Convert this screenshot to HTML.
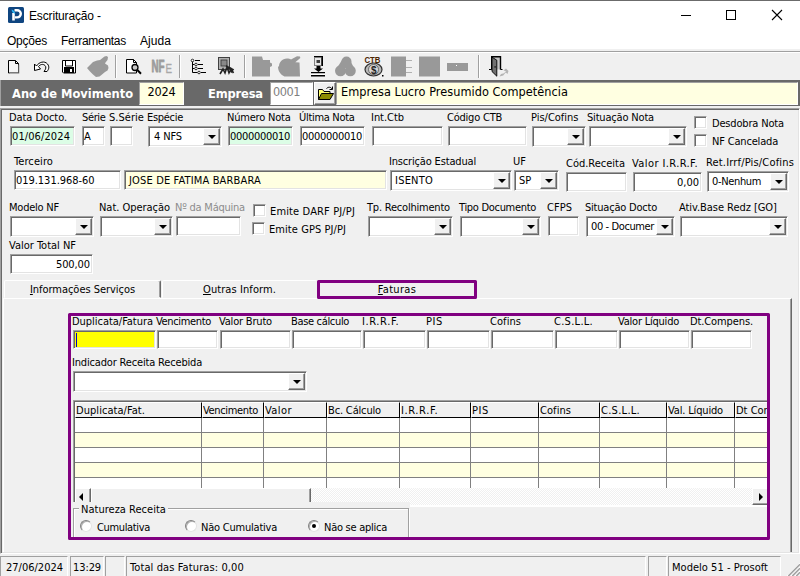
<!DOCTYPE html>
<html><head><meta charset="utf-8"><title>Escrituração</title>
<style>
html,body{margin:0;padding:0;}
body{width:800px;height:576px;position:relative;overflow:hidden;background:#f0f0f0;font:11px/13px "DejaVu Sans Condensed","Liberation Sans",sans-serif;color:#000;}
div,span,i{box-sizing:border-box;}
.abs,.lb,.ed,.ck,.rd{position:absolute;}
.lb{white-space:nowrap;height:13px;line-height:13px;}
.ed{background:#fff;border:1px solid;border-color:#a0a0a0 #fff #fff #a0a0a0;box-shadow:inset 1px 1px 0 #696969,inset -1px -1px 0 #e3e3e3;padding:3px 2px 0 1px;line-height:13px;white-space:nowrap;overflow:hidden;}
.cb{padding-right:19px;}
.dd{position:absolute;right:1px;top:1px;bottom:1px;width:17px;background:#f0f0f0;border:1px solid;border-color:#fff #696969 #696969 #fff;box-shadow:inset -1px -1px 0 #a0a0a0;}
.dd i{position:absolute;left:4px;top:6px;width:0;height:0;border-left:4px solid transparent;border-right:4px solid transparent;border-top:4px solid #000;}
.ck{width:13px;height:13px;background:#fff;border:1px solid;border-color:#a0a0a0 #fff #fff #a0a0a0;box-shadow:inset 1px 1px 0 #696969,inset -1px -1px 0 #e3e3e3;}
.rd{width:12px;height:12px;border-radius:50%;background:#fff;border:1px solid;border-color:#808080 #e3e3e3 #e3e3e3 #808080;box-shadow:inset 1px 1px 0 #b0b0b0;transform:rotate(0deg);}
.rd i{position:absolute;left:3px;top:3px;width:4px;height:4px;border-radius:50%;background:#000;}
u{text-decoration:underline;}
.mn{font:12px/16px "Liberation Sans",sans-serif;white-space:nowrap;}
.bd{font:bold 12.75px/16px "DejaVu Sans Condensed","Liberation Sans",sans-serif;color:#fff;white-space:nowrap;}
.hv{font:12.6px/16px "DejaVu Sans Condensed","Liberation Sans",sans-serif;white-space:nowrap;padding-top:1px;border:1px solid;border-color:#a0a0a0 #fff #fff #a0a0a0;}
.tab{text-align:center;line-height:14px;padding-top:2px;border-radius:2px 2px 0 0;border:1px solid;border-color:#fff #696969 transparent #fff;box-shadow:inset -1px 0 0 #a0a0a0;background:#f0f0f0;}
.gh{background:#f0f0f0;border:1px solid;border-color:#fff #000 #000 #fff;padding:1px 0 0 0;line-height:13px;white-space:nowrap;overflow:hidden;}
.btn{background:#f0f0f0;border:1px solid;border-color:#fff #696969 #696969 #fff;box-shadow:inset -1px -1px 0 #a0a0a0;}
.sbt{background:#f0f0f0 conic-gradient(#fff 25%,#f0f0f0 0 50%,#fff 0 75%,#f0f0f0 0) 0 0/2px 2px;}
.al{position:absolute;left:3px;top:4px;width:0;height:0;border-top:4px solid transparent;border-bottom:4px solid transparent;border-right:4px solid #000;}
.ar{position:absolute;left:6px;top:4px;width:0;height:0;border-top:4px solid transparent;border-bottom:4px solid transparent;border-left:4px solid #000;}
.sp{border:1px solid;border-color:#a0a0a0 #fff #fff #a0a0a0;padding:4px 0 0 5px;line-height:13px;white-space:nowrap;overflow:hidden;}
</style></head><body>
<div class="abs" style="left:0;top:0;width:800px;height:49px;background:#fff"></div>
<div class="abs" style="left:0;top:0;width:800px;height:1px;background:#6b6b6b"></div>
<svg class="abs" style="left:8px;top:7px" width="16" height="16" viewBox="0 0 16 16"><rect x="0" y="0" width="16" height="16" rx="1.5" fill="#0f4580"/><path d="M5.500 13.500V6" fill="none" stroke="#fff" stroke-width="2.600"/><path d="M6.500 3.200h2.700a3.600 3.600 0 0 1 0 7.200H6.800" fill="none" stroke="#fff" stroke-width="2.400"/><path d="M3.500 2.500c2 .5 3.500 2 3.800 4.200c-2-.3-3.400-1.700-3.800-4.200z" fill="#29b6f6"/></svg>
<div class="abs" style="left:29px;top:8px;font:12px/16px 'Liberation Sans',sans-serif;letter-spacing:-0.15px;white-space:nowrap">Escrituração -</div>
<svg class="abs" style="left:662px;top:0" width="138" height="30" viewBox="0 0 138 30"><g stroke="#000" stroke-width="1" fill="none" shape-rendering="crispEdges"><path d="M19 15.5h10"/><rect x="64.5" y="10.5" width="9" height="9"/></g><path d="M110 10l10 10M120 10l-10 10" stroke="#000" stroke-width="1.1" fill="none"/></svg>
<div class="abs mn" style="left:7px;top:33px;letter-spacing:-0.23px;">Opções</div>
<div class="abs mn" style="left:61px;top:33px;letter-spacing:-0.28px;">Ferramentas</div>
<div class="abs mn" style="left:140px;top:33px;letter-spacing:0.06px;">Ajuda</div>
<div class="abs" style="left:0;top:51px;width:800px;height:1px;background:#a0a0a0"></div>
<div class="abs" style="left:0;top:52px;width:800px;height:1px;background:#fff"></div>
<div class="abs" style="left:115px;top:55px;width:2px;height:23px;border-left:1px solid #a0a0a0;border-right:1px solid #fff"></div>
<div class="abs" style="left:179px;top:55px;width:2px;height:23px;border-left:1px solid #a0a0a0;border-right:1px solid #fff"></div>
<div class="abs" style="left:244px;top:55px;width:2px;height:23px;border-left:1px solid #a0a0a0;border-right:1px solid #fff"></div>
<div class="abs" style="left:478px;top:55px;width:2px;height:23px;border-left:1px solid #a0a0a0;border-right:1px solid #fff"></div>
<svg class="abs" style="left:0;top:52px" width="520" height="28" viewBox="0 52 520 28"><!-- new --><path d="M8.500 60.500h7l3 3v9.500h-10z" fill="#f6f6f6" stroke="#000"/><path d="M15.500 60.500v3h3" fill="none" stroke="#000"/><path d="M9.500 73.500h9.500v-9" fill="none" stroke="#b0b0b0" stroke-width="1"/><!-- undo --><path d="M34.500 70.500v-6.500l2 2c2.500-4 8-5.500 11-2c2 2.500 1.500 5-0.500 7.500h-3c2-2.500 2.500-4.500 1-6c-2-2-5-1-6.500 1l2 2.500z" fill="#fff" stroke="#000" stroke-linejoin="round"/><!-- save --><path d="M62.500 60.500h13v12.500h-12l-1-1z" fill="#fff" stroke="#000"/><rect x="64" y="67" width="10" height="6" fill="#000"/><rect x="70" y="69" width="2" height="3" fill="#fff"/><path d="M65.500 61v5h7v-5" fill="none" stroke="#000"/><!-- hand (disabled) --><path d="M87 68l6-6l4-1.500l3-.5l4.500-3.500l2-.5l1.500 1l-.5 3l-2 2.500l-.5 1l3 2l.5 2.500l-1 2.500l-2.500 1.500l-3 2.500l-2.500 2l-3.500 .5l-3-2.500l-3-3z" fill="#999"/><!-- preview --><path d="M126.500 59.500h7l3 3v10.500h-10z" fill="#fff" stroke="#000"/><path d="M133.500 59.500v3h3" fill="none" stroke="#000"/><circle cx="135" cy="67.500" r="3" fill="#c8c8c8" stroke="#000" stroke-width="1.300"/><path d="M137.300 70l3.700 3.700" stroke="#000" stroke-width="2"/><!-- NFE disabled --><text x="151.500" y="72" font-family="'Liberation Sans',sans-serif" font-weight="bold" font-size="16.500" fill="#9c9c9c" stroke="#9c9c9c" stroke-width=".9" textLength="13" lengthAdjust="spacingAndGlyphs">NF</text><text x="165.500" y="73" font-family="'Liberation Sans',sans-serif" font-size="12" fill="#a8a8a8" stroke="#a8a8a8" stroke-width=".3" textLength="6.500" lengthAdjust="spacingAndGlyphs">E</text><!-- tree --><g stroke="#000" fill="none"><path d="M192.500 61v11.500M192.500 64.500h2M192.500 68.500h2M192.500 72.500h5"/><path d="M195 60.500h5M198 64.500h5M198 68.500h5M201 72.500h5" stroke-width="1"/></g><g fill="#fff" stroke="#000" stroke-width=".8"><circle cx="192.500" cy="60.500" r="1.300"/><circle cx="196" cy="64.500" r="1.300"/><circle cx="196" cy="68.500" r="1.300"/><circle cx="199" cy="72.500" r="1.300"/></g><!-- gear icon --><rect x="218.500" y="57.500" width="11" height="12" fill="#b0b0b0" stroke="#404040"/><rect x="221" y="60" width="6" height="6" fill="#888" stroke="#333" stroke-width=".8"/><path d="M220 74l3-5l2 4l2-6l2 6l2-4l2.500 4M226 66l7 3.500l-2 3" fill="none" stroke="#222" stroke-width="1.600"/><!-- gray shapes --><path d="M252 56.500h10l1 3.500h7v2.500l2 1v2.500l-2 1v9.500h-18z" fill="#999"/><path d="M279 66.500c0-4 3-8 8-8c1.500 0 3 .4 4 1l6-3.300l3 .3l.3 1.500l-5 4.200l4.200 .3l.5 14h-15.500c-3.500-1.500-6.500-5-6.500-10z" fill="#999"/><!-- download --><rect x="314" y="56" width="9" height="1.500" fill="#000"/><rect x="314.500" y="57.500" width="7" height="8" fill="#e8e8e8" stroke="#808080"/><rect x="321.500" y="57" width="1.500" height="9" fill="#000"/><rect x="316.500" y="60" width="3.500" height="3" fill="#404040"/><path d="M316.500 66h4v2.500h2.500l-4.500 3.500l-4.500-3.500h2.500z" fill="#000"/><rect x="311" y="72" width="14" height="1.500" fill="#000"/><rect x="311" y="73.500" width="14" height="1.500" fill="#fff"/><rect x="311" y="75" width="14" height="1.500" fill="#000"/><g fill="#999"><circle cx="346.500" cy="61.500" r="5"/><circle cx="340.500" cy="70.800" r="5.500"/><circle cx="350.300" cy="70.800" r="5.500"/><path d="M342 60l-5 8h17l-4-8z"/></g><!-- CTB --><text x="364.500" y="62.500" font-family="'Liberation Sans',sans-serif" font-weight="bold" font-size="8.500" fill="#4a2500" textLength="16" lengthAdjust="spacingAndGlyphs">CTB</text><ellipse cx="373.500" cy="69.500" rx="8.500" ry="6.500" fill="#b8b8b8" stroke="#303030" stroke-width="1.200"/><ellipse cx="373.500" cy="69.500" rx="5" ry="5" fill="#d8d8d8" stroke="#555" stroke-width=".8"/><text x="371" y="73.500" font-family="'Liberation Sans',sans-serif" font-weight="bold" font-size="10" fill="#222">$</text><rect x="382" y="75" width="1.500" height="1.500" fill="#000"/><!-- gray shapes 4,5,6 --><rect x="391" y="56.500" width="15" height="20" fill="#999"/><path d="M406 60.500h6M406 67.500h6M406 72.500h6" stroke="#b0b0b0" stroke-width="1"/><rect x="419" y="56.500" width="21" height="20" fill="#999"/><rect x="447" y="63" width="21" height="8" fill="#999"/><rect x="456" y="65" width="1" height="1" fill="#fff"/><!-- door --><rect x="492" y="57" width="8.500" height="12.500" fill="#c4c4c4"/><path d="M491.700 69.500v-12.800h8.800v12.800" fill="none" stroke="#000" stroke-width="1.400"/><path d="M489 69.500h2.700M500.500 69.500h2" stroke="#000" stroke-width="1.200"/><path d="M492 57.200l4.800 3v16l-4.800-4.700z" fill="#707070" stroke="#000" stroke-width=".9" stroke-linejoin="round"/><rect x="494.500" y="66" width="1.200" height="1.800" fill="#222"/><path d="M499.500 76.500l1.500-2.500l3-.8l2-2l-2.500-.7l2.500-2l2.500 2.500l-1 3l-1.800-1.500l-2.500 3z" fill="#b4b4b4"/></svg>
<div class="abs" style="left:0;top:80px;width:800px;height:26px;background:#696969;border-left:1px solid #a0a0a0"></div>
<div class="abs bd" style="left:12px;top:86px;letter-spacing:0.01px;">Ano de Movimento</div>
<div class="abs bd" style="left:208px;top:86px;letter-spacing:-0.15px;">Empresa</div>
<div class="abs hv" style="left:139px;top:82px;width:45px;height:23px;background:#ffffe1;text-align:center;letter-spacing:-0.21px;">2024</div>
<div class="abs hv" style="left:270px;top:82px;width:43px;height:23px;background:#fff;color:#808080;padding-left:2px;letter-spacing:-0.46px;">0001</div>
<div class="abs" style="left:314px;top:82px;width:22px;height:23px;background:#f0f0f0;border:1px solid;border-color:#fff #696969 #696969 #fff;box-shadow:inset -1px -1px 0 #a0a0a0"></div>
<svg class="abs" style="left:317px;top:85px" width="17" height="16" viewBox="0 0 17 16"><path d="M1.5 14.5V4.5h4l1.5 2h6v2" fill="#ffff70" stroke="#000" stroke-width="1"/><path d="M1.5 14.5l3-6h12l-3.5 6z" fill="#8c8c00" stroke="#000" stroke-width="1" stroke-linejoin="round"/><path d="M9.5 3.5c2-2 4.5-1.500 5.500 .5M15.500 1.500v3h-3" fill="none" stroke="#000" stroke-width="1"/></svg>
<div class="abs hv" style="left:336px;top:82px;width:462px;height:23px;background:#ffffe1;padding-left:4px;letter-spacing:0.04px;">Empresa Lucro Presumido Competência</div>
<div class="abs" style="left:0;top:108px;width:800px;height:446px;border:1px solid;border-color:#a0a0a0 #fff #fff #a0a0a0;box-shadow:inset 1px 1px 0 #696969,inset -1px -1px 0 #e3e3e3"></div>
<div class="lb" style="left:9px;top:111px;letter-spacing:-0.07px;">Data Docto.</div>
<div class="lb" style="left:82px;top:111px;letter-spacing:-0.36px;">Série</div>
<div class="lb" style="left:109px;top:111px;letter-spacing:0.04px;">S.Série</div>
<div class="lb" style="left:147px;top:111px;letter-spacing:-0.30px;">Espécie</div>
<div class="lb" style="left:227px;top:111px;letter-spacing:-0.21px;">Número Nota</div>
<div class="lb" style="left:299px;top:111px;letter-spacing:-0.31px;">Última Nota</div>
<div class="lb" style="left:371px;top:111px;letter-spacing:-0.04px;">Int.Ctb</div>
<div class="lb" style="left:447px;top:111px;letter-spacing:-0.22px;">Código CTB</div>
<div class="lb" style="left:531px;top:111px;letter-spacing:-0.01px;">Pis/Cofins</div>
<div class="lb" style="left:587px;top:111px;letter-spacing:-0.18px;">Situação Nota</div>
<div class="ed" style="left:10px;top:126px;width:65px;height:20px;letter-spacing:0.10px;background:#dcfde6;">01/06/2024</div>
<div class="ed" style="left:82px;top:126px;width:23px;height:20px;">A</div>
<div class="ed" style="left:110px;top:126px;width:23px;height:20px;"></div>
<div class="ed cb" style="left:148px;top:126px;width:74px;height:21px;padding-left:5px;letter-spacing:-0.12px;">4 NFS<span class="dd"><i></i></span></div>
<div class="ed" style="left:228px;top:126px;width:65px;height:20px;letter-spacing:-0.30px;background:#dcfde6;">0000000010</div>
<div class="ed" style="left:300px;top:126px;width:65px;height:20px;letter-spacing:-0.30px;">0000000010</div>
<div class="ed" style="left:372px;top:126px;width:71px;height:20px;"></div>
<div class="ed" style="left:448px;top:126px;width:79px;height:20px;"></div>
<div class="ed cb" style="left:532px;top:126px;width:54px;height:21px;padding-left:4px;"><span class="dd"><i></i></span></div>
<div class="ed cb" style="left:589px;top:126px;width:98px;height:21px;padding-left:4px;"><span class="dd"><i></i></span></div>
<div class="ck" style="left:694px;top:116px"></div>
<div class="lb" style="left:712px;top:117px;letter-spacing:-0.17px;">Desdobra Nota</div>
<div class="ck" style="left:694px;top:134px"></div>
<div class="lb" style="left:712px;top:135px;letter-spacing:-0.18px;">NF Cancelada</div>
<div class="lb" style="left:14px;top:155px;letter-spacing:0.09px;">Terceiro</div>
<div class="lb" style="left:389px;top:155px;letter-spacing:-0.17px;">Inscrição Estadual</div>
<div class="lb" style="left:513px;top:155px;letter-spacing:0.02px;">UF</div>
<div class="lb" style="left:566px;top:157px;letter-spacing:-0.01px;">Cód.Receita</div>
<div class="lb" style="left:632px;top:157px;letter-spacing:0.40px;">Valor I.R.R.F.</div>
<div class="lb" style="left:706px;top:156px;letter-spacing:0.17px;">Ret.Irrf/Pis/Cofins</div>
<div class="ed" style="left:14px;top:170px;width:107px;height:20px;letter-spacing:-0.04px;padding-left:1px;">019.131.968-60</div>
<div class="ed" style="left:124px;top:170px;width:263px;height:20px;letter-spacing:0.15px;background:#ffffe1;padding-left:4px;">JOSE DE FATIMA BARBARA</div>
<div class="ed cb" style="left:390px;top:170px;width:122px;height:21px;padding-left:4px;letter-spacing:0.22px;">ISENTO<span class="dd"><i></i></span></div>
<div class="ed cb" style="left:514px;top:170px;width:45px;height:21px;padding-left:4px;letter-spacing:-0.13px;">SP<span class="dd"><i></i></span></div>
<div class="ed" style="left:566px;top:172px;width:61px;height:20px;"></div>
<div class="ed" style="left:633px;top:172px;width:69px;height:20px;letter-spacing:-0.01px;text-align:right;">0,00</div>
<div class="ed cb" style="left:707px;top:171px;width:82px;height:21px;padding-left:4px;letter-spacing:-0.35px;">0-Nenhum<span class="dd"><i></i></span></div>
<div class="lb" style="left:9px;top:201px;letter-spacing:-0.22px;">Modelo NF</div>
<div class="lb" style="left:99px;top:201px;letter-spacing:-0.04px;">Nat. Operação</div>
<div class="lb" style="left:175px;top:201px;letter-spacing:-0.23px;color:#8c8c8c;">Nº da Máquina</div>
<div class="lb" style="left:367px;top:201px;letter-spacing:-0.21px;">Tp. Recolhimento</div>
<div class="lb" style="left:459px;top:201px;letter-spacing:-0.30px;">Tipo Documento</div>
<div class="lb" style="left:547px;top:201px;letter-spacing:0.04px;">CFPS</div>
<div class="lb" style="left:585px;top:201px;letter-spacing:-0.21px;">Situação Docto</div>
<div class="lb" style="left:679px;top:201px;letter-spacing:-0.05px;">Ativ.Base Redz [GO]</div>
<div class="ed cb" style="left:10px;top:216px;width:84px;height:21px;padding-left:4px;"><span class="dd"><i></i></span></div>
<div class="ed cb" style="left:100px;top:216px;width:73px;height:21px;padding-left:4px;"><span class="dd"><i></i></span></div>
<div class="ed" style="left:176px;top:216px;width:65px;height:20px;"></div>
<div class="ck" style="left:253px;top:204px"></div>
<div class="lb" style="left:270px;top:205px;letter-spacing:0.14px;">Emite DARF PJ/PJ</div>
<div class="ck" style="left:252px;top:222px"></div>
<div class="lb" style="left:269px;top:223px;letter-spacing:0.07px;">Emite GPS PJ/PJ</div>
<div class="ed cb" style="left:368px;top:216px;width:85px;height:21px;padding-left:4px;"><span class="dd"><i></i></span></div>
<div class="ed cb" style="left:460px;top:216px;width:81px;height:21px;padding-left:4px;"><span class="dd"><i></i></span></div>
<div class="ed" style="left:548px;top:216px;width:31px;height:20px;"></div>
<div class="ed cb" style="left:586px;top:216px;width:89px;height:21px;padding-left:4px;letter-spacing:-0.39px;">00 - Documer<span class="dd"><i></i></span></div>
<div class="ed cb" style="left:680px;top:216px;width:108px;height:21px;padding-left:4px;"><span class="dd"><i></i></span></div>
<div class="lb" style="left:9px;top:239px;letter-spacing:-0.01px;">Valor Total NF</div>
<div class="ed" style="left:10px;top:254px;width:83px;height:20px;letter-spacing:-0.10px;text-align:right;">500,00</div>
<div class="abs" style="left:3px;top:298px;width:789px;height:254px;border:1px solid;border-color:#fff #696969 #696969 #fff;border-bottom:0;box-shadow:inset -1px 0 0 #a0a0a0"></div>
<div class="abs tab" style="left:4px;top:280px;width:157px;height:18px;letter-spacing:-0.04px;"><u>I</u>nformações Serviços</div>
<div class="abs tab" style="left:162px;top:280px;width:155px;height:18px;border-right-color:transparent;box-shadow:none;letter-spacing:0.09px;"><u>O</u>utras Inform.</div>
<div class="abs" style="left:317px;top:280px;width:160px;height:19px;border:3px solid #800080;border-radius:1.5px;text-align:center;line-height:14px;padding-top:0;letter-spacing:0.3px"><u>F</u>aturas</div>
<div class="abs" style="left:68px;top:313px;width:702px;height:227px;border:3px solid #800080;border-radius:1.5px;z-index:5"></div>
<div class="lb" style="left:72px;top:315px;letter-spacing:-0.03px;">Duplicata/Fatura</div>
<div class="lb" style="left:156px;top:315px;letter-spacing:-0.34px;">Vencimento</div>
<div class="lb" style="left:219px;top:315px;letter-spacing:-0.19px;">Valor Bruto</div>
<div class="lb" style="left:291px;top:315px;letter-spacing:-0.33px;">Base cálculo</div>
<div class="lb" style="left:362px;top:315px;letter-spacing:0.60px;">I.R.R.F.</div>
<div class="lb" style="left:426px;top:315px;letter-spacing:0.60px;">PIS</div>
<div class="lb" style="left:490px;top:315px;letter-spacing:0.06px;">Cofins</div>
<div class="lb" style="left:554px;top:315px;letter-spacing:0.28px;">C.S.L.L.</div>
<div class="lb" style="left:618px;top:315px;letter-spacing:-0.22px;">Valor Líquido</div>
<div class="lb" style="left:690px;top:315px;letter-spacing:-0.11px;">Dt.Compens.</div>
<div class="ed" style="left:73px;top:330px;width:83px;height:19px;background:#ffff00;"></div>
<div class="ed" style="left:157px;top:330px;width:61px;height:19px;"></div>
<div class="ed" style="left:220px;top:330px;width:71px;height:19px;"></div>
<div class="ed" style="left:292px;top:330px;width:70px;height:19px;"></div>
<div class="ed" style="left:363px;top:330px;width:63px;height:19px;"></div>
<div class="ed" style="left:427px;top:330px;width:63px;height:19px;"></div>
<div class="ed" style="left:491px;top:330px;width:63px;height:19px;"></div>
<div class="ed" style="left:555px;top:330px;width:63px;height:19px;"></div>
<div class="ed" style="left:619px;top:330px;width:71px;height:19px;"></div>
<div class="ed" style="left:691px;top:330px;width:61px;height:19px;"></div>
<div class="abs" style="left:76px;top:333px;width:1px;height:14px;background:#0000c8"></div>
<div class="lb" style="left:72px;top:356px;letter-spacing:-0.17px;">Indicador Receita Recebida</div>
<div class="ed cb" style="left:73px;top:371px;width:234px;height:21px"><span class="dd"><i></i></span></div>
<div class="abs" style="left:73px;top:400px;width:696px;height:107px;background:#fff;border:1px solid;border-color:#a0a0a0 #fff #fff #a0a0a0;box-shadow:inset 1px 1px 0 #696969;overflow:hidden" id="grid">
<div class="abs" style="left:1px;top:17px;width:700px;height:14px;background:#fff"></div>
<div class="abs" style="left:1px;top:31px;width:700px;height:1px;background:#808080"></div>
<div class="abs" style="left:1px;top:32px;width:700px;height:14px;background:#ffffe1"></div>
<div class="abs" style="left:1px;top:46px;width:700px;height:1px;background:#808080"></div>
<div class="abs" style="left:1px;top:47px;width:700px;height:14px;background:#fff"></div>
<div class="abs" style="left:1px;top:61px;width:700px;height:1px;background:#808080"></div>
<div class="abs" style="left:1px;top:62px;width:700px;height:14px;background:#ffffe1"></div>
<div class="abs" style="left:1px;top:76px;width:700px;height:1px;background:#808080"></div>
<div class="abs" style="left:1px;top:77px;width:700px;height:10px;background:#fff"></div>
<div class="abs gh" style="left:1px;top:1px;width:127px;height:16px;padding-left:0px;letter-spacing:0.05px;">Duplicata/Fat.</div>
<div class="abs" style="left:127px;top:17px;width:1px;height:70px;background:#808080"></div>
<div class="abs gh" style="left:128px;top:1px;width:62px;height:16px;padding-left:0px;letter-spacing:-0.34px;">Vencimento</div>
<div class="abs" style="left:189px;top:17px;width:1px;height:70px;background:#808080"></div>
<div class="abs gh" style="left:190px;top:1px;width:63px;height:16px;padding-left:0px;letter-spacing:0.43px;">Valor</div>
<div class="abs" style="left:252px;top:17px;width:1px;height:70px;background:#808080"></div>
<div class="abs gh" style="left:253px;top:1px;width:73px;height:16px;padding-left:0px;letter-spacing:-0.16px;">Bc. Cálculo</div>
<div class="abs" style="left:325px;top:17px;width:1px;height:70px;background:#808080"></div>
<div class="abs gh" style="left:326px;top:1px;width:71px;height:16px;padding-left:0px;letter-spacing:0.60px;">I.R.R.F.</div>
<div class="abs" style="left:396px;top:17px;width:1px;height:70px;background:#808080"></div>
<div class="abs gh" style="left:397px;top:1px;width:68px;height:16px;padding-left:0px;letter-spacing:0.60px;">PIS</div>
<div class="abs" style="left:464px;top:17px;width:1px;height:70px;background:#808080"></div>
<div class="abs gh" style="left:465px;top:1px;width:61px;height:16px;padding-left:0px;letter-spacing:0.06px;">Cofins</div>
<div class="abs" style="left:525px;top:17px;width:1px;height:70px;background:#808080"></div>
<div class="abs gh" style="left:526px;top:1px;width:67px;height:16px;padding-left:0px;letter-spacing:0.28px;">C.S.L.L.</div>
<div class="abs" style="left:592px;top:17px;width:1px;height:70px;background:#808080"></div>
<div class="abs gh" style="left:593px;top:1px;width:68px;height:16px;padding-left:0px;letter-spacing:-0.16px;">Val. Líquido</div>
<div class="abs" style="left:660px;top:17px;width:1px;height:70px;background:#808080"></div>
<div class="abs gh" style="left:661px;top:1px;width:66px;height:16px;padding-left:0px;">Dt Compens.</div>
<div class="abs" style="left:726px;top:17px;width:1px;height:70px;background:#808080"></div>
<div class="abs sbt" style="left:1px;top:87px;width:694px;height:17px"></div>
<div class="abs btn" style="left:1px;top:87px;width:16px;height:17px"><i class="al"></i></div>
<div class="abs btn" style="left:17px;top:87px;width:220px;height:17px"></div>
<div class="abs btn" style="left:678px;top:87px;width:17px;height:17px"><i class="ar"></i></div>
</div>
<div class="abs" style="left:72px;top:502px;width:338px;height:35px;background:#f0f0f0"></div>
<div class="abs" style="left:73px;top:508px;width:336px;height:31px;border:1px solid #a0a0a0;box-shadow:inset 1px 1px 0 #fff,1px 1px 0 #fff"></div>
<div class="lb" style="left:79px;top:503px;background:#f0f0f0;padding:0 2px;letter-spacing:0.02px;">Natureza Receita</div>
<div class="rd" style="left:80px;top:520px"></div>
<div class="lb" style="left:97px;top:521px;letter-spacing:-0.35px;">Cumulativa</div>
<div class="rd" style="left:185px;top:520px"></div>
<div class="lb" style="left:201px;top:521px;letter-spacing:-0.22px;">Não Cumulativa</div>
<div class="rd" style="left:308px;top:520px"><i></i></div>
<div class="lb" style="left:324px;top:521px;letter-spacing:-0.26px;">Não se aplica</div>
<div class="abs" style="left:0;top:554px;width:800px;height:22px;background:#f0f0f0"></div>
<div class="abs sp" style="left:0px;top:556px;width:68px;height:22px;padding-left:5px;letter-spacing:-0.00px;">27/06/2024</div>
<div class="abs sp" style="left:70px;top:556px;width:34px;height:22px;padding-left:2px;letter-spacing:-0.10px;">13:29</div>
<div class="abs sp" style="left:105px;top:556px;width:20px;height:22px;padding-left:0px;"></div>
<div class="abs sp" style="left:126px;top:556px;width:520px;height:22px;padding-left:3px;letter-spacing:0.11px;">Total das Faturas: 0,00</div>
<div class="abs sp" style="left:648px;top:556px;width:19px;height:22px;padding-left:0px;"></div>
<div class="abs sp" style="left:668px;top:556px;width:113px;height:22px;padding-left:3px;letter-spacing:0.03px;">Modelo 51 - Prosoft</div>
<svg class="abs" style="left:786px;top:562px" width="14" height="14" viewBox="0 0 14 14"><g stroke="#fff" stroke-width="1"><path d="M1 14L14 1M5 14l9-9M9 14l5-5"/></g><g stroke="#a0a0a0" stroke-width="1.5"><path d="M2.300 14L14 2.300M6.300 14L14 6.300M10.300 14L14 10.300"/></g></svg>

</body></html>
